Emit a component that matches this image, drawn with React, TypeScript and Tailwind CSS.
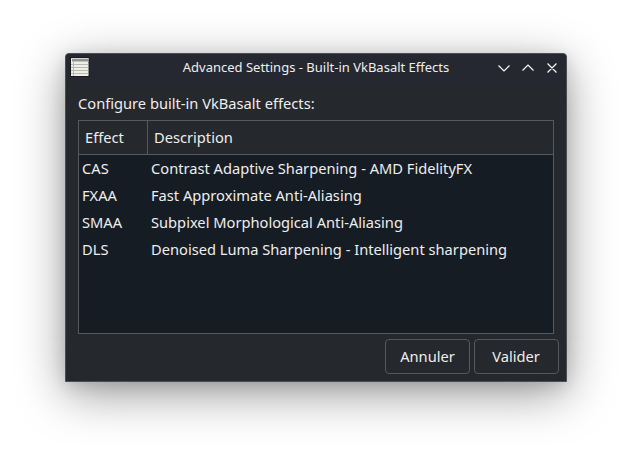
const effects = [
  ["CAS", "Contrast Adaptive Sharpening - AMD FidelityFX"],
  ["FXAA", "Fast Approximate Anti-Aliasing"],
  ["SMAA", "Subpixel Morphological Anti-Aliasing"],
  ["DLS", "Denoised Luma Sharpening - Intelligent sharpening"],
];

export default function App() {
  return (
    <div className="h-[459px] w-[632px] overflow-hidden bg-white pt-[53px] pl-[65px] font-['Noto_Sans',sans-serif] text-[#eeeeee]">
      <div className="flex h-[329px] w-[502px] flex-col overflow-hidden rounded-t-[4px] border border-[#4b4e53] bg-[#25282c] shadow-[0_12px_48px_rgba(0,0,0,0.4),0_4px_16px_rgba(0,0,0,0.12)]">
        <header className="flex h-[28px] shrink-0 items-center bg-[#252830] pl-[4px] pr-[6px] text-[13px]">
          <svg className="mb-[2px]" width="20" height="20" viewBox="0 0 20 20">
            <path d="M0 0H19.500V20H0Z" fill="#17191c" />
            <path d="M1 1H18.500V19H1Z" fill="#efefea" />
            <path d="M1 1H18.500V2H1Z" fill="#d4d4d2" />
            <path d="M2 2H18.500V4.500H2Z" fill="#92928e" />
            <path d="M1 7.500H18.500M1 10.500H18.500M1 13.500H18.500M1 16.500H18.500M3.500 5V19" stroke="#b2b2ac" strokeWidth=".9" />
          </svg>
          <h1 className="flex-1 pl-[46px] text-center">Advanced Settings - Built-in VkBasalt Effects</h1>
          <svg className="mb-px" width="64" height="18" viewBox="0 0 64 18" fill="none" stroke="#fcfcfc" strokeWidth="1.1">
            <path d="M3 6.500 8.500 12 14 6.500M27 11.500 32.500 6 38 11.500M52 4.500 61 13.500M61 4.500 52 13.500" transform="translate(-.5 0)" />
          </svg>
        </header>
        <main className="flex flex-1 flex-col px-[12px] text-[14.667px] leading-5">
          <p className="mt-[11px]">Configure built-in VkBasalt effects:</p>
          <div className="mt-[7px] h-[214px] w-[476px] border border-[#565a5e] bg-[#161c23]">
            <div className="flex h-[34px] items-center border-b border-[#565a5e] bg-[#25282c]">
              <div className="flex h-full w-[69px] items-center border-r border-[#565a5e] pb-px pl-[6px]">Effect</div>
              <div className="pb-px pl-[6px]">Description</div>
            </div>
            {effects.map(([name, desc]) => (
              <div key={name} className="flex h-[27px] items-center pb-px pl-[3px]">
                <div className="w-[69px]">{name}</div>
                <div>{desc}</div>
              </div>
            ))}
          </div>
          <div className="mt-[5px] -mr-[5px] flex justify-end gap-[4px]">
            <button className="h-[35px] w-[85px] rounded-[4px] border border-[#565a5e] bg-[#25282c] pb-px">Annuler</button>
            <button className="h-[35px] w-[85px] rounded-[4px] border border-[#565a5e] bg-[#25282c] pb-px pr-px">Valider</button>
          </div>
        </main>
      </div>
    </div>
  );
}
